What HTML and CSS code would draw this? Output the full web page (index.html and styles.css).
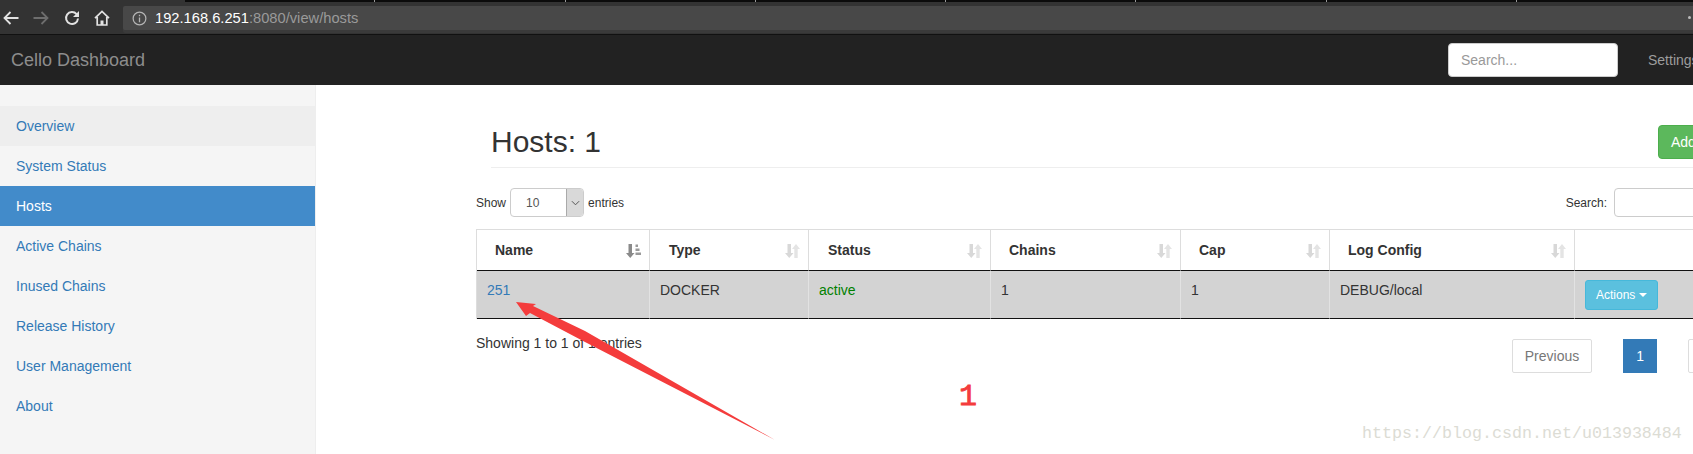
FILE: index.html
```html
<!DOCTYPE html>
<html lang="en">
<head>
<meta charset="utf-8">
<title>Cello Dashboard</title>
<link rel="stylesheet" href="styles.css">
</head>
<body>
<div class="page">
  <header class="chrome">
    <div class="tabstrip">
      <span class="tab"></span><span class="tab"></span><span class="tab"></span><span class="tab"></span><span class="tab"></span><span class="tab"></span><span class="tab"></span>
    </div>
    <div class="toolbar">
      <svg class="tool tool-back" viewBox="0 0 16 14"><path d="M15.500 7H1.500M7.500 1 1.500 7l6 6" fill="none" stroke="#e2e2e2" stroke-width="1.800"/></svg>
      <svg class="tool tool-forward" viewBox="0 0 16 14"><path d="M.5 7h14M8.500 1l6 6-6 6" fill="none" stroke="#6e6e6e" stroke-width="1.800"/></svg>
      <svg class="tool tool-reload" viewBox="0 0 16 16"><path d="M12.600 4.100A6 6 0 1 0 14 8.500" fill="none" stroke="#e2e2e2" stroke-width="2"/><path d="M15 1v6H9z" fill="#e2e2e2"/></svg>
      <svg class="tool tool-home" viewBox="0 0 16 16"><path d="M1 8.200 8 1.500l7 6.700M3.200 7v8h9.600V7" fill="none" stroke="#e2e2e2" stroke-width="1.700"/><path d="M6.500 15v-4.500h3V15z" fill="#e2e2e2"/></svg>
      <div class="omnibox">
        <svg class="info" viewBox="0 0 16 16"><circle cx="8" cy="8" r="6.800" fill="none" stroke="#b5b5b5" stroke-width="1.300"/><path d="M8 7v5M8 4v1.600" stroke="#b5b5b5" stroke-width="1.400"/></svg>
        <span class="url"><span class="url-host">192.168.6.251</span>:8080/view/hosts</span>
        <span class="dots"></span>
      </div>
    </div>
  </header>

  <nav class="navbar">
    <a class="brand">Cello Dashboard</a>
    <div class="nav-right">
      <input class="nav-search" type="text" placeholder="Search...">
      <a class="nav-link">Settings</a>
    </div>
  </nav>

  <div class="layout">
    <aside class="sidebar">
      <a class="side-item side-hover">Overview</a>
      <a class="side-item">System Status</a>
      <a class="side-item side-active">Hosts</a>
      <a class="side-item">Active Chains</a>
      <a class="side-item">Inused Chains</a>
      <a class="side-item">Release History</a>
      <a class="side-item">User Management</a>
      <a class="side-item">About</a>
    </aside>

    <main class="main">
      <div class="content">
        <div class="page-header">
          <h1 class="title">Hosts: 1</h1>
          <button class="btn-add">Add Host</button>
        </div>

        <div class="dt-controls">
          <div class="dt-length">
            <span>Show</span>
            <div class="select"><span class="select-value">10</span><span class="select-arrow"><svg viewBox="0 0 10 6" class="chev"><path d="M1 1l4 4 4-4" fill="none" stroke="#555" stroke-width="1.100"/></svg></span></div>
            <span>entries</span>
          </div>
          <div class="dt-search">
            <span>Search:</span>
            <div class="dt-input"></div>
          </div>
        </div>

        <table class="hosts">
          <thead>
            <tr>
              <th class="c1"><div class="th"><span>Name</span><svg class="sort" viewBox="0 0 15 14"><path d="M2.500 0h3.500v9h2.500l-4.250 5L0 9h2.500z" fill="#8a8a8a"/><path d="M9.500 0.500h2.500v2.500h-2.500zM9.500 4.500h4v2.500h-4zM9.500 8.500h5.500v2.500H9.500z" fill="#9a9a9a"/></svg></div></th>
              <th class="c2"><div class="th"><span>Type</span><svg class="sort" viewBox="0 0 15 14"><path d="M2.500 0h3.500v9h2.500L4.250 14 0 9h2.500z" fill="#d8d8d8"/><path d="M11 0l4 5h-2.300v9H9.300V5H7z" fill="#e4e4e4"/></svg></div></th>
              <th class="c3"><div class="th"><span>Status</span><svg class="sort" viewBox="0 0 15 14"><path d="M2.500 0h3.500v9h2.500L4.250 14 0 9h2.500z" fill="#d8d8d8"/><path d="M11 0l4 5h-2.300v9H9.300V5H7z" fill="#e4e4e4"/></svg></div></th>
              <th class="c4"><div class="th"><span>Chains</span><svg class="sort" viewBox="0 0 15 14"><path d="M2.500 0h3.500v9h2.500L4.250 14 0 9h2.500z" fill="#d8d8d8"/><path d="M11 0l4 5h-2.300v9H9.300V5H7z" fill="#e4e4e4"/></svg></div></th>
              <th class="c5"><div class="th"><span>Cap</span><svg class="sort" viewBox="0 0 15 14"><path d="M2.500 0h3.500v9h2.500L4.250 14 0 9h2.500z" fill="#d8d8d8"/><path d="M11 0l4 5h-2.300v9H9.300V5H7z" fill="#e4e4e4"/></svg></div></th>
              <th class="c6"><div class="th"><span>Log Config</span><svg class="sort" viewBox="0 0 15 14"><path d="M2.500 0h3.500v9h2.500L4.250 14 0 9h2.500z" fill="#d8d8d8"/><path d="M11 0l4 5h-2.300v9H9.300V5H7z" fill="#e4e4e4"/></svg></div></th>
              <th class="c7"></th>
            </tr>
          </thead>
          <tbody>
            <tr>
              <td><a class="link">251</a></td>
              <td>DOCKER</td>
              <td class="status-active">active</td>
              <td>1</td>
              <td>1</td>
              <td>DEBUG/local</td>
              <td class="actions-cell"><button class="btn-actions">Actions<span class="caret"></span></button></td>
            </tr>
          </tbody>
        </table>

        <div class="dt-footer">
          <div class="dt-info">Showing 1 to 1 of 1 entries</div>
          <div class="pagination">
            <a class="page-btn">Previous</a>
            <a class="page-btn page-current">1</a>
            <a class="page-btn">Next</a>
          </div>
        </div>
      </div>
    </main>
  </div>

  <svg class="annotation" viewBox="0 0 1693 454"><polygon points="516,302 536,304 533,306 585,331 775,440 585,342 530,313 526,316" fill="#f43c3c"/></svg>
  <span class="note-number">1</span>
  <span class="watermark">https://blog.csdn.net/u013938484</span>
</div>
</body>
</html>
```

FILE: styles.css
```css
* { box-sizing: border-box; }
html, body { margin: 0; padding: 0; background: #fff; }
body { font-family: "Liberation Sans", Arial, sans-serif; font-size: 14px; color: #333; }

.page { position: relative; width: 1693px; height: 454px; overflow: hidden; display: flex; flex-direction: column; }

/* browser chrome */
.chrome { height: 35px; flex: none; background: #333; border-bottom: 1px solid #111; }
.tabstrip { height: 2px; margin-left: 185px; background: #0b0b0b; display: flex; }
.tab { width: 190.300px; height: 2px; border-right: 1px solid #999; flex: none; }
.toolbar { height: 32px; display: flex; align-items: flex-start; }
.tool { display: block; flex: none; }
.tool-back { width: 16px; height: 14px; margin: 9px 0 0 3px; }
.tool-forward { width: 16px; height: 14px; margin: 9px 0 0 14px; }
.tool-reload { width: 16px; height: 16px; margin: 8px 0 0 15px; }
.tool-home { width: 16px; height: 16px; margin: 8px 0 0 14px; }
.omnibox { flex: 1; height: 24px; margin: 4px 0 0 13px; background: #484848; border-radius: 2px 0 0 2px; display: flex; align-items: center; position: relative; box-shadow: 0 3px 0 #3a3a3a; }
.info { width: 15px; height: 15px; margin-left: 9px; flex: none; }
.url { margin-left: 8px; font-size: 14.700px; color: #9a9a9a; white-space: nowrap; }
.url-host { color: #fff; }
.dots { position: absolute; right: 2px; top: 10px; width: 3px; height: 3px; border-radius: 50%; background: #bbb; }

/* navbar */
.navbar { height: 50px; flex: none; background: #222; display: flex; align-items: center; justify-content: space-between; padding-left: 11px; }
.brand { font-size: 18px; color: #8d8d8d; }
.nav-right { display: flex; align-items: center; width: 245px; flex: none; }
.nav-search { width: 170px; height: 34px; flex: none; border: 1px solid #ccc; border-radius: 4px; background: #fff; padding: 6px 12px; font: 14px "Liberation Sans", Arial, sans-serif; color: #555; }
.nav-search::placeholder { color: #999; opacity: 1; }
.nav-link { margin-left: 30px; color: #9d9d9d; white-space: nowrap; }

/* layout */
.layout { flex: 1; display: flex; min-height: 0; }
.sidebar { width: 316px; flex: none; background: #f5f5f5; border-right: 1px solid #eee; padding-top: 21px; }
.side-item { display: block; height: 40px; line-height: 20px; padding: 10px 16px; color: #337ab7; }
.side-hover { background: #eee; }
.side-active { background: #428bca; color: #fff; }

.main { flex: 1; min-width: 0; overflow: hidden; padding: 40px 0 0 160px; }
.content { width: 1289px; }

.page-header { display: flex; justify-content: space-between; margin: 0 25px 0 15px; height: 43px; border-bottom: 1px solid #eee; }
.title { margin: 0; font-size: 30px; font-weight: 500; line-height: 33px; color: #333; }
.btn-add { height: 34px; width: 82px; flex: none; padding: 6px 12px; background: #5cb85c; border: 1px solid #4cae4c; border-radius: 4px; color: #fff; font: 14px "Liberation Sans", Arial, sans-serif; white-space: nowrap; }

.dt-controls { display: flex; justify-content: space-between; align-items: center; height: 29px; margin-top: 20px; font-size: 12px; }
.dt-length, .dt-search { display: flex; align-items: center; }
.select { width: 74px; height: 29px; margin: 0 4px; border: 1px solid #ccc; border-radius: 4px; display: flex; overflow: hidden; }
.select-value { flex: 1; padding: 1px 0 0 15px; line-height: 27px; color: #555; }
.select-arrow { width: 17px; background: #d9d9d9; border-left: 1px solid #aaa; display: flex; align-items: center; justify-content: center; }
.chev { width: 9px; height: 6px; display: block; }
.dt-input { width: 151px; height: 29px; margin-left: 7px; border: 1px solid #ccc; border-radius: 4px 0 0 4px; }

.hosts { width: 1289px; margin-top: 12px; table-layout: fixed; border-collapse: separate; border-spacing: 0; border-top: 1px solid #ddd; border-left: 1px solid #ddd; }
.c1 { width: 173px; }
.c2 { width: 159px; }
.c3 { width: 182px; }
.c4 { width: 190px; }
.c5 { width: 149px; }
.c6 { width: 245px; }
.hosts th { height: 41px; padding: 0 8px 0 18px; text-align: left; font-weight: 700; border-right: 1px solid #ddd; border-bottom: 1px solid #111; }
.hosts th.c2, .hosts th.c3 { padding-left: 19px; }
.th { display: flex; justify-content: space-between; align-items: center; line-height: 20px; }
.sort { width: 15px; height: 14px; display: block; flex: none; margin-top: 1px; }
.hosts td { height: 48px; padding: 9px 10px; line-height: 20px; vertical-align: top; background: #d3d3d3; border-right: 1px solid #e2e2e2; border-bottom: 1px solid #111; }
.link { color: #337ab7; }
.status-active { color: #008000; }
.hosts .actions-cell { padding: 0 0 0 10px; vertical-align: middle; }
.btn-actions { display: block; width: 73px; height: 30px; padding: 0 10px; background: #5bc0de; border: 1px solid #46b8da; border-radius: 3px; color: #fff; font: 12px/18px "Liberation Sans", Arial, sans-serif; white-space: nowrap; text-align: left; }
.caret { display: inline-block; margin-left: 4px; vertical-align: 2px; border-top: 4px solid #fff; border-left: 4px solid transparent; border-right: 4px solid transparent; }

.dt-footer { display: flex; justify-content: space-between; align-items: flex-start; margin-top: 14px; }
.dt-info { line-height: 20px; }
.pagination { display: flex; gap: 31px; margin: 6px 22px 0 0; }
.page-btn { height: 34px; padding: 6px 12px; line-height: 20px; border: 1px solid #ddd; border-radius: 2px; color: #777; }
.page-current { width: 34px; background: #337ab7; border-color: #337ab7; border-radius: 0; color: #fff; text-align: center; padding: 6px 0; }

/* things drawn on top of the screenshot */
.annotation { position: absolute; left: 0; top: 0; width: 1693px; height: 454px; pointer-events: none; }
.note-number { position: absolute; left: 959px; top: 381px; font: 400 30px/32px "Liberation Mono", monospace; -webkit-text-stroke: 0.8px #f43c3c; color: #f43c3c; }
.watermark { position: absolute; left: 1362px; top: 424px; font: 16.670px/20px "Liberation Mono", monospace; color: #dcdcd4; white-space: nowrap; }
```
